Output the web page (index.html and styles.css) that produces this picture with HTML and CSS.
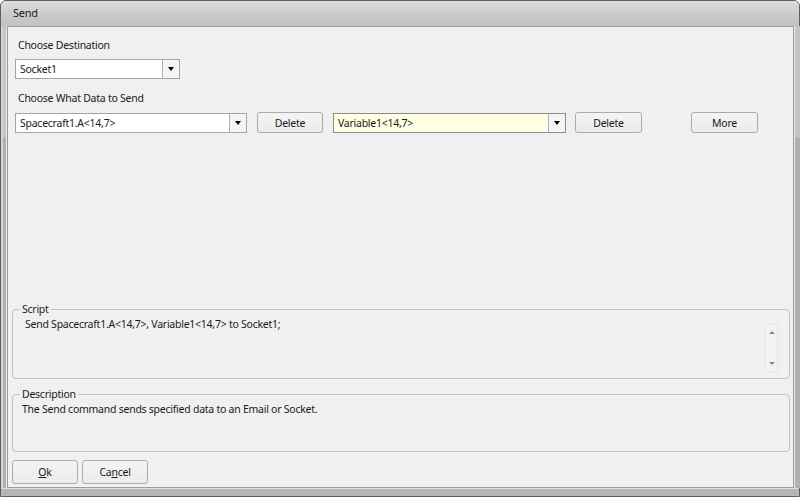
FILE: index.html
```html
<!DOCTYPE html>
<html>
<head>
<meta charset="utf-8">
<link rel="stylesheet" href="styles.css">
</head>
<body>
<div class="window">
  <div class="titlebar">Send</div>
  <div class="frame-row">
    <div class="side side-left"></div>
    <div class="client">
      <div class="label label-dest">Choose Destination</div>
      <div class="combo combo-dest">
        <span class="combo-text">Socket1</span>
        <span class="combo-btn"><span class="arrow"></span></span>
      </div>
      <div class="label label-data">Choose What Data to Send</div>
      <div class="data-row">
        <div class="combo combo-data">
          <span class="combo-text">Spacecraft1.A&lt;14,7&gt;</span>
          <span class="combo-btn"><span class="arrow"></span></span>
        </div>
        <button class="btn btn-del1">Delete</button>
        <div class="combo combo-data combo-yellow">
          <span class="combo-text">Variable1&lt;14,7&gt;</span>
          <span class="combo-btn"><span class="arrow"></span></span>
        </div>
        <button class="btn btn-del2">Delete</button>
        <button class="btn btn-more">More</button>
      </div>
      <div class="spacer"></div>
      <fieldset class="group group-script">
        <legend>Script</legend>
        <div class="script-text">Send Spacecraft1.A&lt;14,7&gt;, Variable1&lt;14,7&gt; to Socket1;</div>
        <div class="vscroll">
          <span class="up"></span>
          <span class="down"></span>
        </div>
      </fieldset>
      <fieldset class="group group-desc">
        <legend>Description</legend>
        <div class="desc-text">The Send command sends specified data to an Email or Socket.</div>
      </fieldset>
      <div class="footer">
        <button class="btn btn-foot"><u>O</u>k</button>
        <button class="btn btn-foot">Ca<u>n</u>cel</button>
      </div>
    </div>
    <div class="side side-right"></div>
  </div>
  <div class="bottom-frame"></div>
</div>
</body>
</html>
```

FILE: styles.css
```css
* { box-sizing: border-box; }
html, body { margin: 0; padding: 0; }
body {
  width: 800px;
  height: 497px;
  background: #ffffff;
  font-family: "Noto Sans", "Open Sans", sans-serif;
  font-size: 10.5px;
  letter-spacing: -0.25px;
  color: #1a1a1a;
  overflow: hidden;
}
.window {
  width: 800px;
  height: 497px;
  display: flex;
  flex-direction: column;
  background: #c6c6c6;
  border: 1px solid #5e5e5e;
  border-radius: 6px 6px 0 0;
}
.titlebar {
  height: 25px;
  flex: none;
  padding-left: 12px;
  line-height: 23px;
  font-size: 11px;
  color: #1c1c1c;
  background: linear-gradient(#dedede, #c8c8c8 60%, #c2c2c2);
  border-radius: 5px 5px 0 0;
}
.frame-row {
  flex: 1;
  display: flex;
  min-height: 0;
}
.side {
  width: 6px;
  flex: none;
  background: linear-gradient(#c4c4c4 0, #c4c4c4 112px, #b0b0b0 112px);
}
.side-left {
  border-right: 1px solid #e8e8e8;
  box-shadow: inset 2px 0 0 #d4d4d4;
}
.side-right {
  border-left: 1px solid #e8e8e8;
}
.client {
  flex: 1;
  display: flex;
  flex-direction: column;
  background: #f0f0f0;
  border: 1px solid #9c9c9c;
  padding: 0 3px 3px 3px;
}
.bottom-frame {
  height: 8px;
  flex: none;
  background: #b6b6b6;
  border-top: 1px solid #e0e0e0;
}
.label {
  line-height: 16px;
  padding-left: 7px;
}
.label-dest { margin-top: 10px; }
.label-data { margin-top: 11px; }
.combo {
  display: flex;
  height: 20px;
  border: 1px solid #a5a5a5;
  background: #ffffff;
}
.combo-dest {
  margin-top: 6px;
  margin-left: 4px;
  width: 165px;
}
.combo-text {
  flex: 1;
  line-height: 18px;
  padding-left: 4px;
  white-space: nowrap;
}
.combo-btn {
  width: 17px;
  flex: none;
  border-left: 1px solid #b0b0b0;
  background: #f4f4f4;
  display: flex;
  align-items: center;
  justify-content: center;
}
.arrow {
  width: 0;
  height: 0;
  border-left: 3.5px solid transparent;
  border-right: 3.5px solid transparent;
  border-top: 4px solid #000;
}
.data-row {
  display: flex;
  margin-top: 6px;
  margin-left: 4px;
  align-items: center;
}
.combo-data { width: 232px; }
.combo-yellow { background: #ffffe1; border-color: #8c8c8c; width: 233px; }
.btn {
  font-family: inherit;
  font-size: 10.5px;
  letter-spacing: -0.25px;
  color: #1a1a1a;
  height: 21px;
  width: 66px;
  padding: 0;
  border: 1px solid #ababab;
  border-radius: 3px;
  background: linear-gradient(#f4f4f4, #ebebeb);
}
.btn-del1 { margin-left: 10px; }
.combo-data.combo-yellow { margin-left: 10px; }
.btn-del2 { margin-left: 9px; width: 67px; }
.btn-more { margin-left: 49px; width: 67px; }
.spacer { flex: 1; }
.group {
  margin: 0 0 0 1px;
  width: 778px;
  border: 1px solid #c2c2c2;
  border-radius: 4px;
  padding: 0;
  position: relative;
  flex: none;
}
.group legend {
  margin-left: 7px;
  padding: 0 2px;
  line-height: 14px;
}
.group-script { height: 77px; }
.script-text {
  padding-left: 12px;
  line-height: 16px;
  margin-top: 0;
}
.vscroll {
  position: absolute;
  right: 11px;
  top: 8px;
  width: 13px;
  height: 48px;
  background: #f2f2f2;
  border: 1px solid #e6e6e6;
}
.vscroll .up, .vscroll .down {
  position: absolute;
  left: 3px;
  width: 0;
  height: 0;
  border-left: 3px solid transparent;
  border-right: 3px solid transparent;
}
.vscroll .up { top: 6px; border-bottom: 3px solid #8a8a8a; }
.vscroll .down { bottom: 6px; border-top: 3px solid #8a8a8a; }
.group-desc { height: 65px; margin-top: 8px; }
.desc-text {
  padding-left: 9px;
  line-height: 16px;
  margin-top: 0;
}
.footer {
  display: flex;
  gap: 4px;
  margin-top: 8px;
  margin-left: 1px;
  flex: none;
}
.btn-foot { width: 66px; height: 24px; }
```
